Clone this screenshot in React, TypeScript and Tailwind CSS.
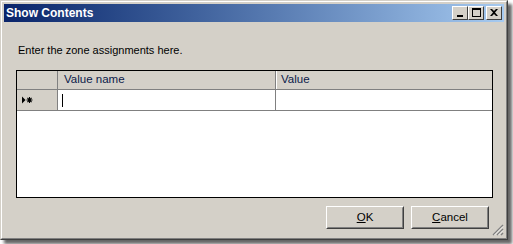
import { ReactNode } from 'react';

const font = { fontFamily: 'Tahoma, "Liberation Sans", Arial, sans-serif' };

type CaptionButtonProps = {
  children: ReactNode;
};

const CaptionButton = ({ children }: CaptionButtonProps) => (
  <div className="w-[16px] h-[14px] bg-[#d4d0c8] border border-t-white border-l-white border-r-[#404040] border-b-[#404040] flex items-center justify-center">
    {children}
  </div>
);

type DialogButtonProps = {
  hotkey: string;
  rest: string;
};

const DialogButton = ({ hotkey, rest }: DialogButtonProps) => (
  <div className="w-[78px] h-[23px] border border-t-white border-l-white border-r-[#404040] border-b-[#404040]">
    <div className="w-full h-full border border-transparent border-r-[#808080] border-b-[#808080] flex items-center justify-center text-[11.5px] text-black">
      <span>
        <span className="underline underline-offset-[1px]">{hotkey}</span>
        {rest}
      </span>
    </div>
  </div>
);

const App = () => {
  return (
    <div className="w-[513px] h-[244px] bg-white" style={font}>
      <div className="relative w-[508px] h-[240px] bg-[#d4d0c8] border border-t-[#d4d0c8] border-l-[#d4d0c8] border-r-[#404040] border-b-[#404040] shadow-[4px_4px_3px_rgba(0,0,0,0.6)]">
        <div className="w-full h-full border border-t-white border-l-white border-r-[#808080] border-b-[#808080] p-[2px] flex flex-col">
          {/* title bar */}
          <div className="h-[18px] bg-gradient-to-r from-[#0a246a] to-[#a6caf0] flex items-center pl-[2px] pr-[2px]">
            <span className="text-white font-bold text-[12px] leading-none flex-1">
              Show Contents
            </span>
            <div className="flex items-center">
              <CaptionButton>
                <div className="w-[6px] h-[2px] bg-black mt-[6px] -ml-[1px]" />
              </CaptionButton>
              <CaptionButton>
                <div className="w-[9px] h-[9px] border border-black border-t-2 -mt-[1px]" />
              </CaptionButton>
              <div className="w-[2px]" />
              <CaptionButton>
                <svg width="8" height="7" viewBox="0 0 8 7" className="-mt-[1px]">
                  <path d="M0 0h2l2 2 2-2h2L5 3.5 8 7H6L4 5 2 7H0l3-3.5z" fill="#000" />
                </svg>
              </CaptionButton>
            </div>
          </div>

          {/* label */}
          <div className="mt-[22px] ml-[14px] text-[11px] leading-[13px] text-black">
            Enter the zone assignments here.
          </div>

          {/* grid */}
          <div className="mt-[13px] ml-[12px] w-[477px] h-[128px] border border-black bg-white flex flex-col">
            <div className="flex h-[19px] bg-[#d4d0c8] border-b border-[#808080]">
              <div className="w-[41px] border-r border-[#808080]" />
              <div className="w-[218px] border-r border-[#808080] pl-[6px] flex items-center text-[11.5px] text-[#0b1a4a]">
                Value name
              </div>
              <div className="flex-1 border-l border-white pl-[4px] flex items-center text-[11.5px] text-[#0b1a4a]">
                Value
              </div>
            </div>
            <div className="flex h-[21px] border-b border-[#808080]">
              <div className="w-[41px] bg-[#d4d0c8] border-r border-[#808080] flex items-center pl-[4px]">
                <svg width="12" height="8" viewBox="0 0 12 8">
                  <path d="M1 0.5v7l3.5-3.5z" fill="#000" />
                  <path
                    d="M8.5 1v6M5.5 4h6M6.4 1.9l4.2 4.2M10.6 1.9l-4.2 4.2"
                    stroke="#000"
                    strokeWidth="1.1"
                  />
                </svg>
              </div>
              <div className="w-[218px] border-r border-[#808080] flex items-center pl-[4px]">
                <div className="w-[1px] h-[13px] bg-black" />
              </div>
              <div className="flex-1" />
            </div>
          </div>

          {/* buttons */}
          <div className="mt-[8px] flex justify-end gap-[7px] pr-[15px]">
            <DialogButton hotkey="O" rest="K" />
            <DialogButton hotkey="C" rest="ancel" />
          </div>
        </div>

        {/* resize grip */}
        <svg
          width="12"
          height="12"
          viewBox="0 0 12 12"
          className="absolute right-[3px] bottom-[3px]"
        >
          <path d="M11 1L1 11M11 5L5 11M11 9L9 11" stroke="#808080" strokeWidth="1.4" />
          <path d="M11 2.5L2.5 11M11 6.5L6.5 11" stroke="#ffffff" strokeWidth="0.8" />
        </svg>
      </div>
    </div>
  );
};

export default App;
